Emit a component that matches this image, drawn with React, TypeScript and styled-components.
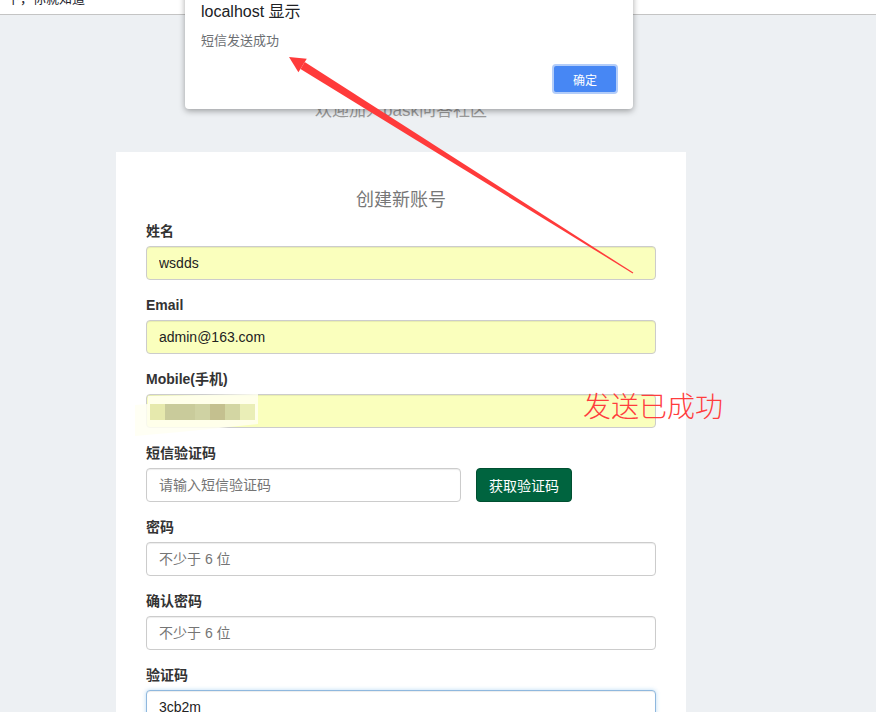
import styled, { createGlobalStyle } from 'styled-components';

const GlobalStyle = createGlobalStyle`
  body {
    margin: 0;
    background-color: #edf0f3;
    font-family: 'Liberation Sans', 'Noto Sans CJK SC', sans-serif;
  }
`;

export const RootStyled = styled.div`
  position: relative;
  height: 712px;
  overflow: hidden;
`;

export const TopBarStyled = styled.div`
  height: 14px;
  background-color: #fff;
  border-bottom: 1px solid #c4c4c4;
  overflow: hidden;
`;

export const TopBarTextStyled = styled.div`
  margin: -8px 0 0 -6px;
  font-size: 13px;
  line-height: 13px;
  color: #1d1d2b;
  white-space: nowrap;
`;

export const PageStyled = styled.div`
  width: 570px;
  margin-left: 116px;
`;

export const WelcomeTitleStyled = styled.h2`
  margin: 84px 0 29px;
  text-align: center;
  font-size: 17px;
  line-height: 24px;
  font-weight: normal;
  color: #9a9a9a;
`;

export const CardStyled = styled.div`
  background-color: #fff;
  padding: 30px 30px 40px;
`;

export const CardTitleStyled = styled.h3`
  margin: 5px 0 8px;
  text-align: center;
  font-size: 18px;
  line-height: 26px;
  font-weight: normal;
  color: #777;
`;

export const FormGroupStyled = styled.div`
  margin-bottom: 15px;
`;

export const LabelStyled = styled.label`
  display: block;
  margin-bottom: 5px;
  font-size: 14px;
  line-height: 20px;
  font-weight: bold;
  color: #333;
`;

export const InputStyled = styled.input<{ $autofill?: boolean; $focused?: boolean }>`
  display: block;
  box-sizing: border-box;
  width: 100%;
  height: 34px;
  padding: 6px 12px;
  font-family: 'Liberation Sans', 'Noto Sans CJK SC', sans-serif;
  font-size: 14px;
  color: #222;
  background-color: ${(p) => (p.$autofill ? '#faffbd' : '#fff')};
  border: 1px solid ${(p) => (p.$focused ? '#8fb8de' : '#ccc')};
  border-radius: 4px;
  box-shadow: ${(p) =>
    p.$focused
      ? 'inset 0 1px 1px rgba(0,0,0,.075), 0 0 4px rgba(102,175,233,.45)'
      : 'inset 0 1px 1px rgba(0,0,0,.075)'};
  outline: none;

  ::placeholder {
    color: #999;
  }
`;

export const InlineRowStyled = styled.div`
  display: flex;
  align-items: center;
  gap: 15px;

  input {
    width: 315px;
    flex: none;
  }
`;

export const SmsButtonStyled = styled.button`
  box-sizing: border-box;
  width: 96px;
  height: 34px;
  padding: 6px 12px;
  font-family: 'Liberation Sans', 'Noto Sans CJK SC', sans-serif;
  font-size: 14px;
  color: #fff;
  background-color: #00643f;
  border: 1px solid #004f31;
  border-radius: 4px;
`;

export const DialogStyled = styled.div`
  position: absolute;
  left: 185px;
  top: -15px;
  width: 448px;
  box-sizing: border-box;
  padding: 16px 15px 15px 16px;
  background-color: #fff;
  border-radius: 0 0 4px 4px;
  box-shadow: 0 2px 6px rgba(0, 0, 0, 0.35);
`;

export const DialogTitleStyled = styled.div`
  font-size: 16px;
  line-height: 22px;
  color: #202124;
`;

export const DialogMessageStyled = styled.div`
  margin-top: 9px;
  font-size: 13px;
  line-height: 18px;
  color: #6b6e72;
`;

export const DialogActionsStyled = styled.div`
  display: flex;
  justify-content: flex-end;
  margin-top: 14px;
`;

export const DialogButtonStyled = styled.button`
  box-sizing: border-box;
  width: 66px;
  height: 30px;
  font-family: 'Liberation Sans', 'Noto Sans CJK SC', sans-serif;
  font-size: 12px;
  color: #fff;
  background-color: #4787f4;
  border: 2px solid #b3cdf9;
  border-radius: 4px;
`;

export const OverlayStyled = styled.div`
  position: absolute;
  inset: 0;
  pointer-events: none;
`;

export const AnnotationTextStyled = styled.div`
  position: absolute;
  left: 583px;
  top: 388px;
  font-family: 'Noto Sans CJK SC', sans-serif;
  font-size: 28px;
  font-weight: 300;
  line-height: 34px;
  color: #ff3d3d;
  white-space: nowrap;
`;

const mosaic = [
  { x: 150, w: 15, c: '#e6e9ad' },
  { x: 165, w: 30, c: '#c9cb9b' },
  { x: 195, w: 15, c: '#cfd2a3' },
  { x: 210, w: 15, c: '#c4c08f' },
  { x: 225, w: 15, c: '#d3d6a3' },
  { x: 240, w: 15, c: '#eaeeb7' },
];

const Marks = () => (
  <svg width='876' height='712' viewBox='0 0 876 712' style={{ position: 'absolute', left: 0, top: 0 }}>
    <polygon
      points='148,396 258,394 258,424 180,432 135,436 135,405 148,404'
      fill='rgba(255,255,242,0.85)'
    />
    {mosaic.map((m) => (
      <rect key={m.x} x={m.x} y={404} width={m.w} height={16} fill={m.c} />
    ))}
    <polygon points='304.7,62.1 633.3,272.6 632.7,273.4 300.5,68.9' fill='#ff3b3b' />
    <polygon points='289,57 306.8,58.7 298.4,72.3' fill='#ff3b3b' />
  </svg>
);

export default function App() {
  return (
    <RootStyled>
      <GlobalStyle />
      <TopBarStyled>
        <TopBarTextStyled>一下，你就知道</TopBarTextStyled>
      </TopBarStyled>

      <PageStyled>
        <WelcomeTitleStyled>欢迎加入pask问答社区</WelcomeTitleStyled>
        <CardStyled>
          <CardTitleStyled>创建新账号</CardTitleStyled>
          <FormGroupStyled>
            <LabelStyled>姓名</LabelStyled>
            <InputStyled $autofill defaultValue='wsdds' />
          </FormGroupStyled>
          <FormGroupStyled>
            <LabelStyled>Email</LabelStyled>
            <InputStyled $autofill defaultValue='admin@163.com' />
          </FormGroupStyled>
          <FormGroupStyled>
            <LabelStyled>Mobile(手机)</LabelStyled>
            <InputStyled $autofill defaultValue='' />
          </FormGroupStyled>
          <FormGroupStyled>
            <LabelStyled>短信验证码</LabelStyled>
            <InlineRowStyled>
              <InputStyled placeholder='请输入短信验证码' />
              <SmsButtonStyled>获取验证码</SmsButtonStyled>
            </InlineRowStyled>
          </FormGroupStyled>
          <FormGroupStyled>
            <LabelStyled>密码</LabelStyled>
            <InputStyled type='password' placeholder='不少于 6 位' />
          </FormGroupStyled>
          <FormGroupStyled>
            <LabelStyled>确认密码</LabelStyled>
            <InputStyled type='password' placeholder='不少于 6 位' />
          </FormGroupStyled>
          <FormGroupStyled>
            <LabelStyled>验证码</LabelStyled>
            <InputStyled $focused defaultValue='3cb2m' />
          </FormGroupStyled>
        </CardStyled>
      </PageStyled>

      <DialogStyled>
        <DialogTitleStyled>localhost 显示</DialogTitleStyled>
        <DialogMessageStyled>短信发送成功</DialogMessageStyled>
        <DialogActionsStyled>
          <DialogButtonStyled>确定</DialogButtonStyled>
        </DialogActionsStyled>
      </DialogStyled>

      <OverlayStyled>
        <Marks />
        <AnnotationTextStyled>发送已成功</AnnotationTextStyled>
      </OverlayStyled>
    </RootStyled>
  );
}
